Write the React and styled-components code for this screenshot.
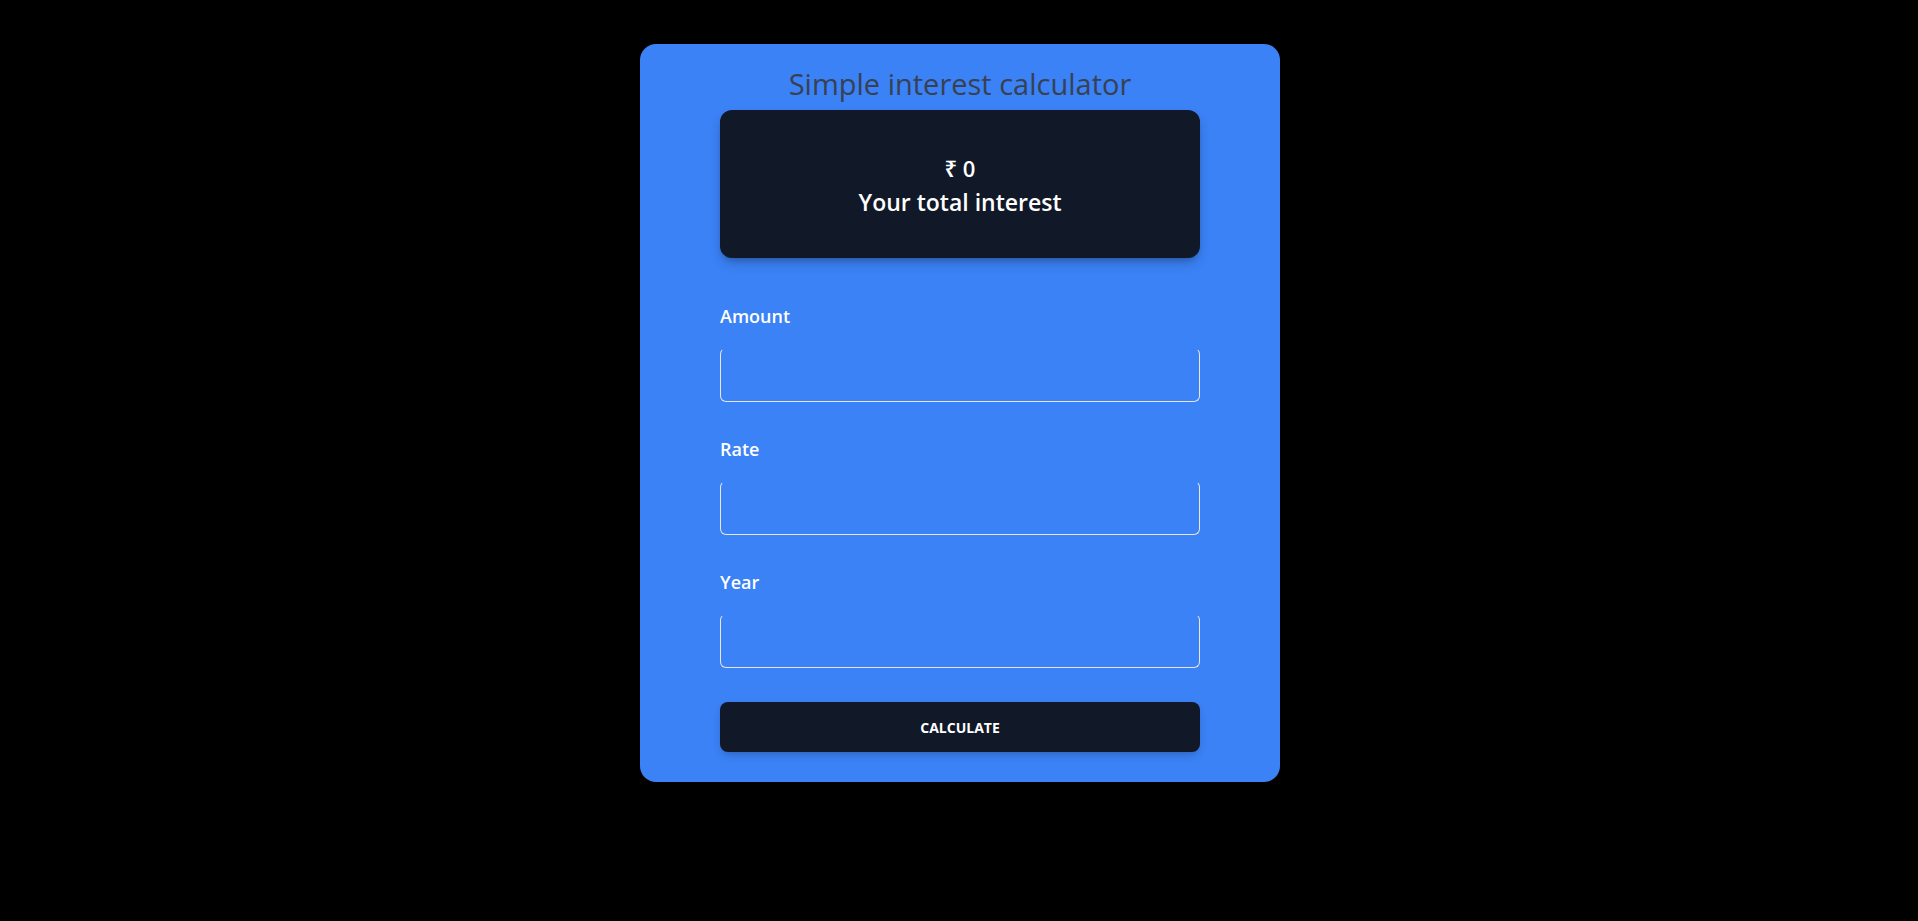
import React, { useState } from "react";
import styled, { createGlobalStyle } from "styled-components";

const GlobalStyle = createGlobalStyle`
  html, body {
    margin: 0;
    padding: 0;
    background: #000;
    min-height: 100vh;
    font-family: "Open Sans", "Noto Sans", "Liberation Sans", sans-serif;
  }
`;

const Page = styled.div`
  display: flex;
  justify-content: center;
  padding: 44px 0 0 2px;
`;

const Card = styled.div`
  width: 640px;
  box-sizing: border-box;
  background: #3b82f6;
  border-radius: 16px;
  padding: 22px 0 30px;
  display: flex;
  flex-direction: column;
  align-items: center;
`;

const Title = styled.h1`
  margin: 0;
  font-size: 29px;
  line-height: 36px;
  font-weight: 400;
  color: #374151;
`;

const Inner = styled.div`
  width: 480px;
  display: flex;
  flex-direction: column;
`;

const ResultBox = styled.div`
  margin-top: 8px;
  height: 148px;
  box-sizing: border-box;
  padding: 42px 0 40px;
  background: #111827;
  border-radius: 12px;
  box-shadow: 0 6px 12px -2px rgba(0, 0, 0, 0.25), 0 3px 6px -3px rgba(0, 0, 0, 0.2);
  display: flex;
  flex-direction: column;
  align-items: center;
  gap: 2px;
  color: #fff;
  font-weight: 600;
`;

const ResultLine = styled.div`
  font-size: ${p => p.size}px;
  line-height: 32px;
`;

const Form = styled.form`
  margin-top: 44px;
  display: flex;
  flex-direction: column;
`;

const Field = styled.div`
  display: flex;
  flex-direction: column;
  margin-bottom: ${p => (p.last ? 34 : 33)}px;
`;

const Label = styled.label`
  font-size: 18px;
  line-height: 28px;
  font-weight: 600;
  color: #fff;
  margin-bottom: 18px;
`;

const Input = styled.input`
  height: 54px;
  box-sizing: border-box;
  background: transparent;
  border: 1px solid #e5e7eb;
  border-top-color: transparent;
  border-radius: 6px;
  padding: 0 14px;
  font-family: inherit;
  font-size: 16px;
  color: #fff;
  outline: none;
`;

const Button = styled.button`
  height: 50px;
  border: none;
  border-radius: 8px;
  background: #111827;
  color: #fff;
  font-family: inherit;
  font-size: 14px;
  font-weight: 700;
  text-transform: uppercase;
  box-shadow: 0 4px 8px -2px rgba(0, 0, 0, 0.25);
  cursor: pointer;
`;

const App = () => {
    const [amount, setAmount] = useState("");
    const [rate, setRate] = useState("");
    const [year, setYear] = useState("");
    const [interest, setInterest] = useState(0);

    const calculate = e => {
        e.preventDefault();
        const si = (Number(amount) * Number(rate) * Number(year)) / 100;
        setInterest(isNaN(si) ? 0 : si);
    };

    return (
        <Page>
            <GlobalStyle />
            <Card>
                <Title>Simple interest calculator</Title>
                <Inner>
                    <ResultBox>
                        <ResultLine size={22}>₹ {interest}</ResultLine>
                        <ResultLine size={23}>Your total interest</ResultLine>
                    </ResultBox>
                    <Form onSubmit={calculate}>
                        <Field>
                            <Label htmlFor="amount">Amount</Label>
                            <Input id="amount" value={amount} onChange={e => setAmount(e.target.value)} />
                        </Field>
                        <Field>
                            <Label htmlFor="rate">Rate</Label>
                            <Input id="rate" value={rate} onChange={e => setRate(e.target.value)} />
                        </Field>
                        <Field last>
                            <Label htmlFor="year">Year</Label>
                            <Input id="year" value={year} onChange={e => setYear(e.target.value)} />
                        </Field>
                        <Button type="submit">Calculate</Button>
                    </Form>
                </Inner>
            </Card>
        </Page>
    );
};

export default App;
